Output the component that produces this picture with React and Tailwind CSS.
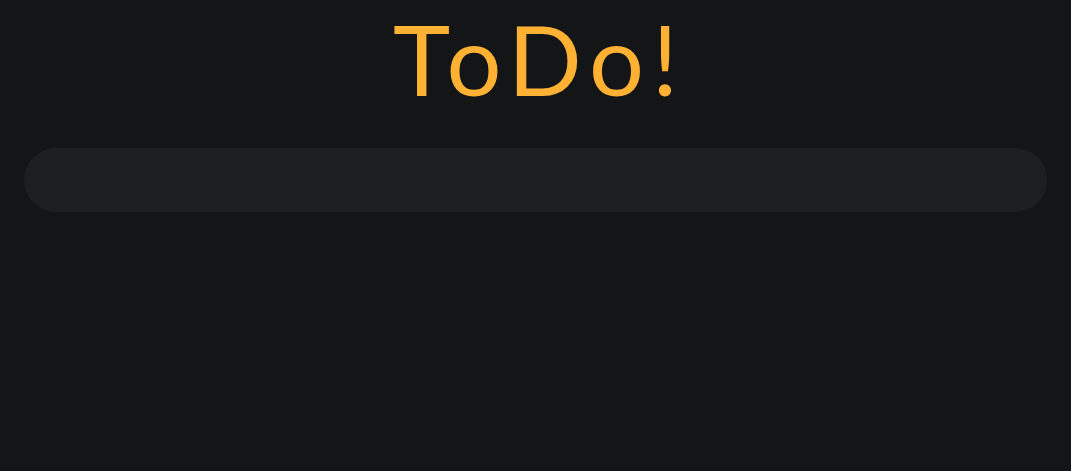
export default function App() {
  return (
    <div className="min-h-screen bg-[#141517] px-6 font-['Lato','Noto_Sans',sans-serif]">
      <h1 className="pl-[8px] text-center text-[97px] font-normal leading-[117px] tracking-[8px] text-[#ffb134]">
        ToDo!
      </h1>
      <div className="mt-[31px]">
        <input
          type="text"
          className="h-16 w-full rounded-full bg-[#1c1f21] px-8 text-xl text-white outline-none"
        />
      </div>
    </div>
  )
}
